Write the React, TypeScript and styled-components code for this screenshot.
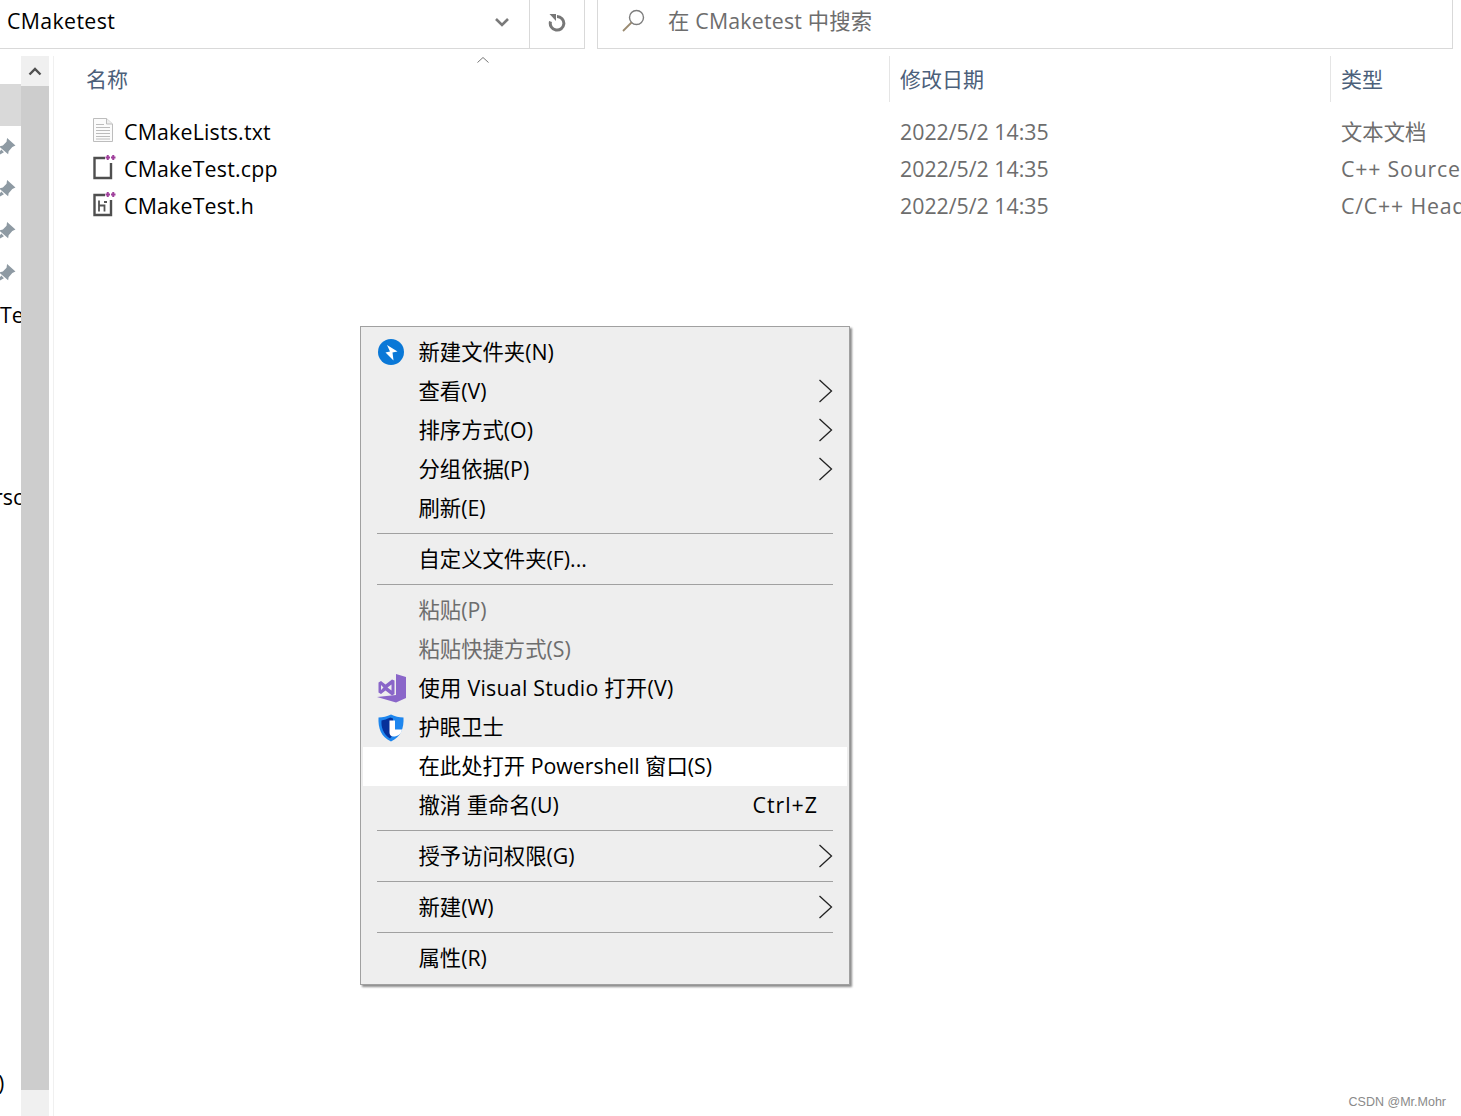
import React from "react";
import styled, { createGlobalStyle } from "styled-components";

const FONT = `"Open Sans", "Noto Sans CJK SC", sans-serif`;

const GlobalStyle = createGlobalStyle`
  html, body {
    margin: 0;
    padding: 0;
    background: #fff;
  }
  body {
    font-family: ${FONT};
    font-size: 21.33px;
    line-height: 28px;
  }
`;

const Page = styled.div`
  position: relative;
  width: 1461px;
  height: 1116px;
  overflow: hidden;
  background: #fff;
`;

const TopBar = styled.div`
  display: flex;
  height: 49px;
  width: 1453px;
`;
const AddressBox = styled.div`
  width: 585px;
  display: flex;
  align-items: center;
  border-bottom: 1px solid #d9d9d9;
  border-right: 1px solid #d9d9d9;
  box-sizing: border-box;
`;
const AddressText = styled.div`
  flex: 1;
  padding: 0 0 6px 7px;
  letter-spacing: 0.35px;
  color: #000;
`;
const DropButton = styled.div`
  width: 54px;
  display: flex;
  align-items: center;
  justify-content: center;
  padding-bottom: 4px;
`;
const RefreshButton = styled.div`
  width: 55px;
  height: 100%;
  box-sizing: border-box;
  border-left: 1px solid #d9d9d9;
  display: flex;
  align-items: center;
  justify-content: center;
  padding-bottom: 4px;
`;
const SearchBox = styled.div`
  margin-left: 12px;
  flex: 1;
  display: flex;
  align-items: center;
  gap: 23px;
  padding: 0 0 7px 24px;
  border: 1px solid #d9d9d9;
  border-top: none;
  box-sizing: border-box;
  letter-spacing: 0.2px;
  color: #6d6d6d;
`;

const Body = styled.div`
  display: flex;
  height: 1060px;
  margin-top: 7px;
`;

const NavPane = styled.div`
  width: 21px;
  flex: none;
  overflow: hidden;
  display: flex;
  flex-direction: column;
  padding-top: 28px;
`;
const NavRow = styled.div<{ $selected?: boolean; $gap?: number }>`
  height: 42px;
  flex: none;
  margin-top: ${(p) => p.$gap ?? 0}px;
  background: ${(p) => (p.$selected ? "#d9d9d9" : "transparent")};
  display: flex;
  align-items: center;
  color: #000;
  white-space: nowrap;
`;
const NavText = styled.span<{ $shift?: number }>`
  margin-left: ${(p) => p.$shift ?? 0}px;
`;
const PinIcon = styled.svg`
  flex: none;
  margin-left: -5px;
`;

const ScrollTrack = styled.div`
  width: 28px;
  flex: none;
  display: flex;
  flex-direction: column;
  background: #f0f0f0;
`;
const ScrollUp = styled.div`
  height: 30px;
  display: flex;
  align-items: center;
  justify-content: center;
`;
const ScrollThumb = styled.div`
  height: 1004px;
  background: #cdcdcd;
`;
const PaneGap = styled.div`
  width: 4px;
  flex: none;
  background: #fff;
  border-right: 1px solid #f0f0f0;
`;

const ListPane = styled.div`
  flex: 1;
  min-width: 0;
  overflow: hidden;
`;
const Grid = styled.div`
  display: grid;
  grid-template-columns: 835px 441px 1fr;
`;
const HeadCell = styled.div<{ $first?: boolean }>`
  position: relative;
  height: 46px;
  display: flex;
  align-items: center;
  padding-left: ${(p) => (p.$first ? 32 : 10)}px;
  padding-bottom: 1px;
  box-sizing: border-box;
  border-left: ${(p) => (p.$first ? "none" : "1px solid #e5e5e5")};
  font-size: 21px;
  color: #4c607a;
`;
const SortCaret = styled.svg`
  position: absolute;
  left: 422px;
  top: 0;
`;
const Rows = styled.div`
  margin-top: 11px;
`;
const FileRow = styled.div`
  display: grid;
  grid-template-columns: 835px 441px 1fr;
  height: 37px;
  align-items: center;
  white-space: nowrap;
`;
const NameCell = styled.div`
  display: flex;
  align-items: center;
  gap: 10px;
  padding-left: 38px;
  letter-spacing: 0.2px;
  color: #000;
`;
const InfoCell = styled.div<{ $spacing?: number }>`
  padding-left: 11px;
  letter-spacing: ${(p) => p.$spacing ?? 0}px;
  color: #6d6d6d;
`;
const FileIcon = styled.svg`
  flex: none;
  margin-top: -3px;
`;

const Menu = styled.div`
  position: absolute;
  left: 360px;
  top: 326px;
  width: 490px;
  height: 659px;
  box-sizing: border-box;
  padding: 6px 2px;
  background: #eeeeee;
  border: 1px solid #a0a0a0;
  box-shadow: 2px 2px 2px rgba(0, 0, 0, 0.45);
  color: #000;
`;
const MenuRow = styled.div<{ $disabled?: boolean; $active?: boolean }>`
  height: 39px;
  display: flex;
  align-items: center;
  background: ${(p) => (p.$active ? "#fff" : "transparent")};
  color: ${(p) => (p.$disabled ? "#6d6d6d" : "#000")};
  white-space: nowrap;
`;
const MenuIcon = styled.div`
  width: 56px;
  flex: none;
  display: flex;
  padding-left: 14px;
  box-sizing: border-box;
`;
const MenuLabel = styled.div<{ $wide?: boolean }>`
  flex: 1;
  padding-bottom: 2px;
  margin-left: -0.5px;
  letter-spacing: ${(p) => (p.$wide ? 0.25 : 0)}px;
`;
const Shortcut = styled.div`
  padding: 0 29px 2px 0;
  letter-spacing: 1px;
`;
const ArrowSlot = styled.div`
  padding: 0 14px 2px 0;
  display: flex;
  align-items: center;
`;
const Separator = styled.div`
  height: 1px;
  margin: 5px 14px 6px 14px;
  background: #a0a0a0;
`;
const Watermark = styled.div`
  position: absolute;
  right: 15px;
  top: 1088px;
  font-family: "Liberation Sans", sans-serif;
  font-size: 12.5px;
  color: #8a8a8a;
`;

const Chevron = () => (
  <svg width="16" height="24" viewBox="0 0 16 24">
    <path d="M2.5 1 L14.5 12 L2.5 23" fill="none" stroke="#222" strokeWidth="1.3" />
  </svg>
);

const Pin = () => (
  <PinIcon width="21" height="21" viewBox="0 0 20 20">
    <path d="M11.5 1 L19.5 8 L16.5 9.5 L13 13.5 L12.5 16.5 L4 9 L7.5 8 L11 4.5 Z M6 12 L8.5 14.5 L0 19.5 Z" fill="#8e9aa3" />
  </PinIcon>
);

const TextFileIcon = () => (
  <FileIcon width="22" height="26" viewBox="0 0 22 26">
    <path d="M1.5 1.5 H14.5 L20.5 7 V24.5 H1.5 Z" fill="#fbfbfb" stroke="#bdbdbd" />
    <path d="M14.5 1.5 V7 H20.5" fill="#eee" stroke="#bdbdbd" />
    <path d="M4 7.5 H12 M4 10.5 H18 M4 13.5 H18 M4 16.5 H18 M4 19.5 H18 M4 22 H18" stroke="#bcbcbc" />
  </FileIcon>
);

const SourceFileIcon = ({ header }: { header?: boolean }) => (
  <FileIcon width="24" height="26" viewBox="0 0 24 26" style={{ marginRight: -2 }}>
    <path d="M13 4 H2.5 V24 H19 V9" fill="#fff" stroke="#4f4f4f" strokeWidth="2.4" />
    {header && (
      <path d="M7 9.5 V20.5 M7 14.5 H12.5 V20.5 M12 11 H15" fill="none" stroke="#555" strokeWidth="1.8" />
    )}
    <path d="M13.5 3.5 H18 M15.75 1 V6 M19 3.5 H23.5 M21.25 1 V6" stroke="#a0409c" strokeWidth="2" />
  </FileIcon>
);

const BoltBadge = () => (
  <svg width="26" height="26" viewBox="0 0 26 26" style={{ marginLeft: 1, marginTop: -1 }}>
    <circle cx="13" cy="13" r="13" fill="#0a78d7" />
    <path d="M9 6 L19.5 12.5 L14.5 13.5 L15.5 21.5 L7.5 13.5 L12 12.5 Z" fill="#fff" />
  </svg>
);

const StudioLogo = () => (
  <svg width="29" height="29" viewBox="0 0 29 29">
    <path d="M0 23 L19 28.5 L29 24 V3 L19 0 V21 Z" fill="#8a66c9" />
    <path d="M1.5 8.5 L4 7 L8.5 10.5 L15 5.5 L17.5 6.5 V20 L15 21.5 L8.5 16.5 L4 20 L1.5 18.5 Z M4 11 V16 L6.5 13.5 Z M10.5 13.5 L14.5 16.5 V10.5 Z" fill="#8a66c9" fillRule="evenodd" />
  </svg>
);

const ShieldLogo = () => (
  <svg width="26" height="28" viewBox="0 0 26 28" style={{ marginLeft: 1 }}>
    <path d="M13 0.5 C17 2.5 21 3.5 25.5 3.5 C26 14 23 23 13 27.5 C3 23 0 14 0.5 3.5 C5 3.5 9 2.5 13 0.5 Z" fill="#1e86ee" />
    <path d="M12.5 3.5 C9 5 6 6 3.5 6.5 C3 13 5 20 12 24.5 L15 21 V4.5 Z" fill="#06309a" />
    <path d="M11.5 6.5 H17 V15.5 H24 C23.5 20 19.5 22.5 15.5 22.5 C12.5 22.5 11.5 20.5 11.5 18.5 Z" fill="#fff" />
  </svg>
);

const files = [
  { name: "CMakeLists.txt", type: "文本文档", spacing: 0, icon: <TextFileIcon /> },
  { name: "CMakeTest.cpp", type: "C++ Source", spacing: 0.8, icon: <SourceFileIcon /> },
  { name: "CMakeTest.h", type: "C/C++ Header", spacing: 0.8, icon: <SourceFileIcon header /> },
];

const App: React.FC = () => {
  return (
    <Page>
      <GlobalStyle />
      <TopBar>
        <AddressBox>
          <AddressText>CMaketest</AddressText>
          <DropButton>
            <svg width="16" height="10" viewBox="0 0 16 10">
              <path d="M2 2 L8 8 L14 2" fill="none" stroke="#7a7a7a" strokeWidth="2.6" />
            </svg>
          </DropButton>
          <RefreshButton>
            <svg width="18" height="20" viewBox="0 0 18 20">
              <path d="M9 4.5 A6.8 6.8 0 1 1 2.5 9.5" fill="none" stroke="#777" strokeWidth="3" />
              <path d="M1.5 2 H8 V9 Z" fill="#777" />
            </svg>
          </RefreshButton>
        </AddressBox>
        <SearchBox>
          <svg width="23" height="23" viewBox="0 0 23 23">
            <circle cx="14.5" cy="8.5" r="7" fill="none" stroke="#7d7d7d" strokeWidth="1.4" />
            <path d="M9.5 13.5 L1 22" stroke="#9a8a70" strokeWidth="1.8" />
          </svg>
          <span>在 CMaketest 中搜索</span>
        </SearchBox>
      </TopBar>
      <Body>
        <NavPane>
          <NavRow $selected />
          {[0, 1, 2, 3].map((i) => (
            <NavRow key={i}>
              <Pin />
            </NavRow>
          ))}
          <NavRow>
            <NavText>Tes</NavText>
          </NavRow>
          <NavRow $gap={140}>
            <NavText $shift={-6}>rsc</NavText>
          </NavRow>
          <NavRow $gap={544}>
            <NavText $shift={-2}>)</NavText>
          </NavRow>
        </NavPane>
        <ScrollTrack>
          <ScrollUp>
            <svg width="14" height="9" viewBox="0 0 14 9">
              <path d="M1.5 7.5 L7 2 L12.5 7.5" fill="none" stroke="#505050" strokeWidth="2.4" />
            </svg>
          </ScrollUp>
          <ScrollThumb />
        </ScrollTrack>
        <PaneGap />
        <ListPane>
          <Grid>
            <HeadCell $first>
              名称
              <SortCaret width="14" height="8" viewBox="0 0 14 8">
                <path d="M1.5 6.5 L7 1.5 L12.5 6.5" fill="none" stroke="#777" strokeWidth="1" />
              </SortCaret>
            </HeadCell>
            <HeadCell>修改日期</HeadCell>
            <HeadCell>类型</HeadCell>
          </Grid>
          <Rows>
            {files.map((f) => (
              <FileRow key={f.name}>
                <NameCell>
                  {f.icon}
                  {f.name}
                </NameCell>
                <InfoCell>2022/5/2 14:35</InfoCell>
                <InfoCell $spacing={f.spacing}>{f.type}</InfoCell>
              </FileRow>
            ))}
          </Rows>
        </ListPane>
      </Body>
      <Menu>
        <MenuRow>
          <MenuIcon><BoltBadge /></MenuIcon>
          <MenuLabel>新建文件夹(N)</MenuLabel>
        </MenuRow>
        <MenuRow>
          <MenuIcon />
          <MenuLabel>查看(V)</MenuLabel>
          <ArrowSlot><Chevron /></ArrowSlot>
        </MenuRow>
        <MenuRow>
          <MenuIcon />
          <MenuLabel>排序方式(O)</MenuLabel>
          <ArrowSlot><Chevron /></ArrowSlot>
        </MenuRow>
        <MenuRow>
          <MenuIcon />
          <MenuLabel>分组依据(P)</MenuLabel>
          <ArrowSlot><Chevron /></ArrowSlot>
        </MenuRow>
        <MenuRow>
          <MenuIcon />
          <MenuLabel>刷新(E)</MenuLabel>
        </MenuRow>
        <Separator />
        <MenuRow>
          <MenuIcon />
          <MenuLabel>自定义文件夹(F)...</MenuLabel>
        </MenuRow>
        <Separator />
        <MenuRow $disabled>
          <MenuIcon />
          <MenuLabel>粘贴(P)</MenuLabel>
        </MenuRow>
        <MenuRow $disabled>
          <MenuIcon />
          <MenuLabel>粘贴快捷方式(S)</MenuLabel>
        </MenuRow>
        <MenuRow>
          <MenuIcon><StudioLogo /></MenuIcon>
          <MenuLabel $wide>使用 Visual Studio 打开(V)</MenuLabel>
        </MenuRow>
        <MenuRow>
          <MenuIcon><ShieldLogo /></MenuIcon>
          <MenuLabel>护眼卫士</MenuLabel>
        </MenuRow>
        <MenuRow $active>
          <MenuIcon />
          <MenuLabel>在此处打开 Powershell 窗口(S)</MenuLabel>
        </MenuRow>
        <MenuRow>
          <MenuIcon />
          <MenuLabel>撤消 重命名(U)</MenuLabel>
          <Shortcut>Ctrl+Z</Shortcut>
        </MenuRow>
        <Separator />
        <MenuRow>
          <MenuIcon />
          <MenuLabel>授予访问权限(G)</MenuLabel>
          <ArrowSlot><Chevron /></ArrowSlot>
        </MenuRow>
        <Separator />
        <MenuRow>
          <MenuIcon />
          <MenuLabel>新建(W)</MenuLabel>
          <ArrowSlot><Chevron /></ArrowSlot>
        </MenuRow>
        <Separator />
        <MenuRow>
          <MenuIcon />
          <MenuLabel>属性(R)</MenuLabel>
        </MenuRow>
      </Menu>
      <Watermark>CSDN @Mr.Mohr</Watermark>
    </Page>
  );
};

export default App;
